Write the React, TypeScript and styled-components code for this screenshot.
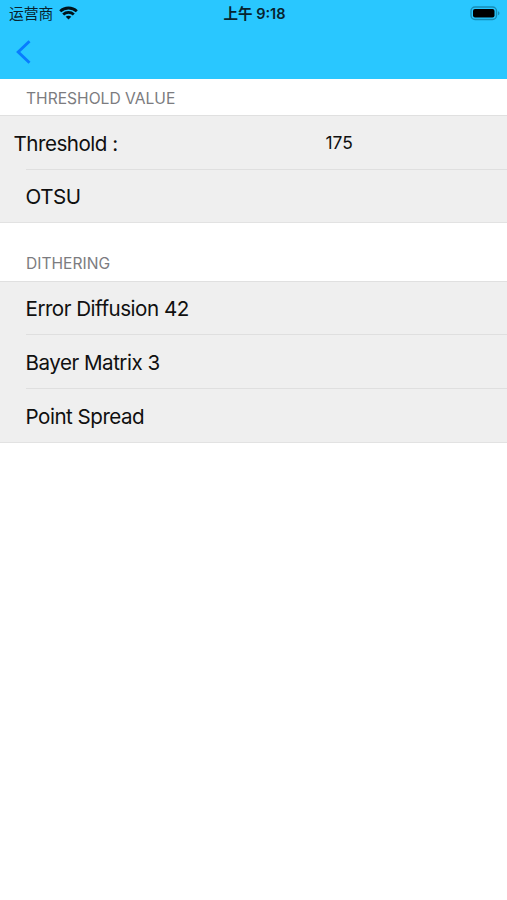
import React from "react";
import styled, { createGlobalStyle } from "styled-components";

const GlobalStyle = createGlobalStyle`
  body { margin: 0; background: #fff; font-family: Inter, "Noto Sans CJK SC", sans-serif; color: #101010; }
  * { box-sizing: border-box; }
`;
const Screen = styled.main`
  height: 900px;
  overflow: hidden;
  background: #fff;
`;
const Header = styled.header`
  height: 79px;
  background: #29c7ff;
`;
const StatusBar = styled.div`
  height: 27px;
  display: grid;
  grid-template-columns: 1fr auto 1fr;
  align-items: center;
  padding: 0 7px 0 9px;
  color: #07232e;
  font-size: 14.8px;
  line-height: 24px;
`;
const Carrier = styled.div`
  display: flex;
  align-items: center;
  gap: 6px;
  span { padding-top: 1px; }
  svg { margin-bottom: 2px; }
`;
const Clock = styled.time`
  font-size: 14.5px;
  font-weight: 600;
  white-space: pre;
`;
const Battery = styled.svg`
  justify-self: end;
`;
const BackButton = styled.button`
  display: block;
  margin: 0;
  padding: 12px 0 0 15px;
  border: 0;
  background: none;
`;
const SectionTitle = styled.h2<{ $height: number; $bottom: number }>`
  height: ${(p) => p.$height}px;
  margin: 0;
  padding: 0 26px ${(p) => p.$bottom}px;
  display: flex;
  align-items: flex-end;
  color: #7c7c80;
  font-size: 15.6px;
  line-height: 20px;
  font-weight: 400;
`;
const List = styled.div`
  background: #efefef;
  border-top: 1px solid #e0e0e0;
  border-bottom: 1px solid #e2e2e2;
`;
const Row = styled.div<{ $height?: number }>`
  height: ${(p) => p.$height ?? 54}px;
  display: grid;
  grid-template-columns: 312px auto;
  justify-content: start;
  align-items: center;
  margin-left: 26px;
  border-bottom: 1px solid #dfdfdf;
  &:last-child { border-bottom: 0; }
`;
const Label = styled.span<{ $outdent?: boolean }>`
  margin-left: ${(p) => (p.$outdent ? -12.5 : -0.5)}px;
  padding-top: 2px;
  font-size: 20.6px;
  letter-spacing: -0.5px;
  line-height: 28px;
  white-space: nowrap;
`;
const Value = styled.span`
  margin-left: -12.5px;
  font-size: 17.4px;
`;

export default function App() {
  return (
    <Screen>
      <GlobalStyle />
      <Header>
        <StatusBar>
          <Carrier>
            <span>运营商</span>
            <svg width="19" height="14" viewBox="0 0 19 14" fill="none" stroke="#00131a" strokeWidth="2.8">
              <path d="M1.2 5.3C5.8.9 13.2.9 17.8 5.3M4.2 8.5c3-2.8 7.6-2.8 10.6 0" />
              <path d="M9.5 13.6 6.7 10.8c1.6-1.3 4-1.3 5.6 0Z" fill="#00131a" stroke="none" />
            </svg>
          </Carrier>
          <Clock>上午 9:18</Clock>
          <Battery width="30" height="15" viewBox="0 0 30 15">
            <rect x="1" y="1" width="25.5" height="12.5" rx="4" fill="none" stroke="#178db6" strokeWidth="1.4" />
            <rect x="3" y="3" width="21.5" height="8.5" rx="2" fill="#000" />
            <path d="M28 5.2v4c2-.7 2-3.3 0-4Z" fill="#178db6" />
          </Battery>
        </StatusBar>
        <BackButton aria-label="Back">
          <svg width="18" height="26" viewBox="0 0 18 26" fill="none" stroke="#087cff" strokeWidth="2.9">
            <path d="M14.5 2.2 3.2 13l11.3 10.8" />
          </svg>
        </BackButton>
      </Header>
      <SectionTitle $height={36} $bottom={6}>THRESHOLD VALUE</SectionTitle>
      <List>
        <Row>
          <Label $outdent>Threshold :</Label>
          <Value>175</Value>
        </Row>
        <Row $height={52}>
          <Label>OTSU</Label>
        </Row>
      </List>
      <SectionTitle $height={58} $bottom={7}>DITHERING</SectionTitle>
      <List>
        <Row $height={53}>
          <Label>Error Diffusion 42</Label>
        </Row>
        <Row>
          <Label>Bayer Matrix 3</Label>
        </Row>
        <Row $height={53}>
          <Label>Point Spread</Label>
        </Row>
      </List>
    </Screen>
  );
}
